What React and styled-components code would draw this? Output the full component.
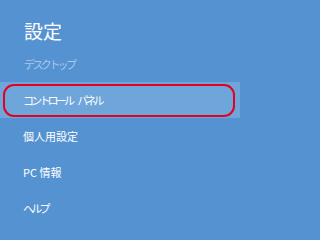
import React from "react";
import styled, { createGlobalStyle } from "styled-components";

const GlobalStyle = createGlobalStyle`
  html, body {
    margin: 0;
    padding: 0;
    background: #5592d1;
  }
`;

const Pane = styled.div`
  width: 240px;
  height: 240px;
  background: #5592d1;
  font-family: "Noto Sans CJK JP", "Noto Sans", sans-serif;
  color: #ffffff;
  overflow: hidden;
  display: flex;
  flex-direction: column;
`;

const Header = styled.div`
  padding: 19px 0 0 24px;
  height: 63px;
  box-sizing: border-box;
`;

const Title = styled.h1`
  margin: 0;
  font-size: 19px;
  font-weight: 400;
  line-height: 24px;
`;

const Subtitle = styled.div`
  margin-top: 14px;
  font-size: 11px;
  line-height: 14px;
  color: #a9c9ec;
  letter-spacing: -2.6px;
`;

const Menu = styled.ul`
  list-style: none;
  margin: 19px 0 0;
  padding: 0;
`;

const Item = styled.li`
  position: relative;
  height: 36px;
  display: flex;
  align-items: center;
  padding-left: 23px;
  font-size: 11px;
  white-space: pre;
  letter-spacing: ${({ $kana }) => ($kana ? "-2.8px" : "0")};
  background: ${({ $selected }) => ($selected ? "#6ea5da" : "transparent")};

  &::after {
    content: "";
    display: ${({ $selected }) => ($selected ? "block" : "none")};
    position: absolute;
    top: 2px;
    left: 3px;
    right: 5px;
    bottom: 1px;
    border: 2px solid #e5001e;
    border-radius: 11px;
  }
`;

const Gap = styled.span`
  display: inline-block;
  width: 5px;
`;

export default function App() {
  return (
    <>
      <GlobalStyle />
      <Pane>
        <Header>
          <Title>設定</Title>
          <Subtitle>デスクトップ</Subtitle>
        </Header>
        <Menu>
          <Item $kana $selected>
            コントロール<Gap />パネル
          </Item>
          <Item>個人用設定</Item>
          <Item>PC 情報</Item>
          <Item $kana>ヘルプ</Item>
        </Menu>
      </Pane>
    </>
  );
}
